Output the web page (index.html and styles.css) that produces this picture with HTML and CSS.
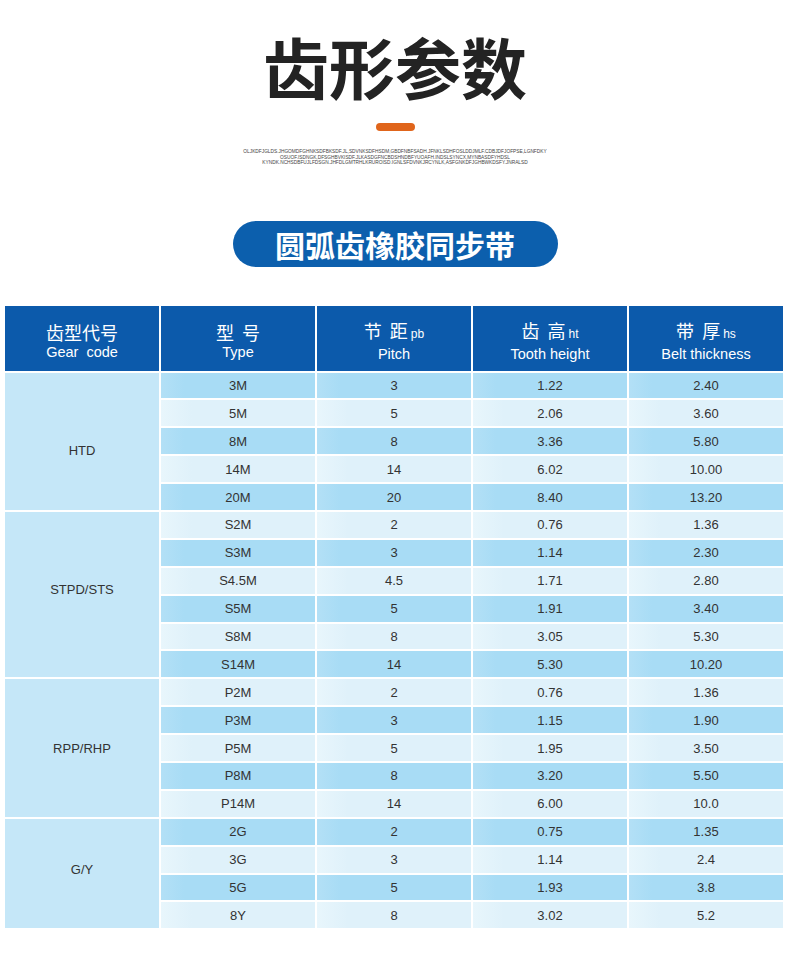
FILE: index.html
```html
<!DOCTYPE html>
<html lang="zh-CN">
<head>
<meta charset="utf-8">
<title>齿形参数</title>
<link rel="stylesheet" href="styles.css">
</head>
<body>
<div class="page">
  <h1 class="title">齿形参数</h1>
  <div class="accent"></div>
  <div class="fine">
    <p>OLJKDFJGLDS.JHGOMDFGHNKSDFBKSDF.JL,SDVNKSDFHSDM,GBDFNBFSADH.JFNKLSDHFOSLDDJMLF.CDBJDFJOFPSE,LGNFDKY</p>
    <p>OSUOF.ISDNGK,DFSGHBVKISDF.JLKASDGFNCBDSHNDBFYUOAFH.INDSLSYNCX,MYNBASDFYHDSL</p>
    <p>KYNDK.NCHSDBFUJLFDSGN.JHFDLGMTRHLKRUROISD.IGNLSFDVNKJRCYNLK,ASFGNKDFJGHBWKDSFY.JNRALSD</p>
  </div>
  <div class="pill">圆弧齿橡胶同步带</div>

  <div class="grid">
    <div class="hd"><span class="zh">齿型代号</span><span class="en">Gear&nbsp; code</span></div>
    <div class="hd"><span class="zh">型&nbsp;&nbsp;号</span><span class="en">Type</span></div>
    <div class="hd"><span class="zh">节&nbsp;&nbsp;距<small>pb</small></span><span class="en">Pitch</span></div>
    <div class="hd"><span class="zh">齿&nbsp;&nbsp;高<small>ht</small></span><span class="en">Tooth height</span></div>
    <div class="hd"><span class="zh">带&nbsp;&nbsp;厚<small>hs</small></span><span class="en">Belt thickness</span></div>

    <div class="grp span5 lower">HTD</div>
    <div class="c d">3M</div><div class="c d">3</div><div class="c d">1.22</div><div class="c d">2.40</div>
    <div class="c l">5M</div><div class="c l">5</div><div class="c l">2.06</div><div class="c l">3.60</div>
    <div class="c d">8M</div><div class="c d">8</div><div class="c d">3.36</div><div class="c d">5.80</div>
    <div class="c l">14M</div><div class="c l">14</div><div class="c l">6.02</div><div class="c l">10.00</div>
    <div class="c d">20M</div><div class="c d">20</div><div class="c d">8.40</div><div class="c d">13.20</div>

    <div class="grp span6 higher">STPD/STS</div>
    <div class="c l">S2M</div><div class="c l">2</div><div class="c l">0.76</div><div class="c l">1.36</div>
    <div class="c d">S3M</div><div class="c d">3</div><div class="c d">1.14</div><div class="c d">2.30</div>
    <div class="c l">S4.5M</div><div class="c l">4.5</div><div class="c l">1.71</div><div class="c l">2.80</div>
    <div class="c d">S5M</div><div class="c d">5</div><div class="c d">1.91</div><div class="c d">3.40</div>
    <div class="c l">S8M</div><div class="c l">8</div><div class="c l">3.05</div><div class="c l">5.30</div>
    <div class="c d">S14M</div><div class="c d">14</div><div class="c d">5.30</div><div class="c d">10.20</div>

    <div class="grp span5">RPP/RHP</div>
    <div class="c l">P2M</div><div class="c l">2</div><div class="c l">0.76</div><div class="c l">1.36</div>
    <div class="c d">P3M</div><div class="c d">3</div><div class="c d">1.15</div><div class="c d">1.90</div>
    <div class="c l">P5M</div><div class="c l">5</div><div class="c l">1.95</div><div class="c l">3.50</div>
    <div class="c d">P8M</div><div class="c d">8</div><div class="c d">3.20</div><div class="c d">5.50</div>
    <div class="c l">P14M</div><div class="c l">14</div><div class="c l">6.00</div><div class="c l">10.0</div>

    <div class="grp span4 higher-sm">G/Y</div>
    <div class="c d">2G</div><div class="c d">2</div><div class="c d">0.75</div><div class="c d">1.35</div>
    <div class="c l">3G</div><div class="c l">3</div><div class="c l">1.14</div><div class="c l">2.4</div>
    <div class="c d">5G</div><div class="c d">5</div><div class="c d">1.93</div><div class="c d">3.8</div>
    <div class="c l">8Y</div><div class="c l">8</div><div class="c l">3.02</div><div class="c l">5.2</div>
  </div>
</div>
</body>
</html>
```
FILE: styles.css
```css
html, body {
  margin: 0;
  padding: 0;
  background: #ffffff;
}
body {
  font-family: "Liberation Sans", "Noto Sans CJK SC", sans-serif;
  color: #333333;
}
.page {
  width: 790px;
  display: flex;
  flex-direction: column;
  align-items: center;
}
.title {
  margin: 32px 0 0 0;
  font-family: "Noto Sans CJK SC", sans-serif;
  font-weight: 700;
  font-size: 66px;
  line-height: 66px;
  color: #232323;
  letter-spacing: 0;
}
.accent {
  margin-top: 25px;
  width: 39px;
  height: 8px;
  border-radius: 4px;
  background: #e0651b;
}
.fine {
  margin-top: 18px;
  text-align: center;
  font-family: "Liberation Sans", sans-serif;
  font-size: 4.8px;
  line-height: 5.5px;
  color: #444444;
}
.fine p {
  margin: 0;
}
.pill {
  margin-top: 55px;
  width: 325px;
  height: 46px;
  border-radius: 23px;
  background: #0c5fad;
  color: #ffffff;
  font-family: "Noto Sans CJK SC", sans-serif;
  font-weight: 700;
  font-size: 30px;
  line-height: 46px;
  text-align: center;
}
.grid {
  align-self: flex-start;
  margin: 39px 0 0 5px;
  width: 778px;
  display: grid;
  grid-template-columns: repeat(5, 1fr);
  grid-template-rows: 65px repeat(20, 25.9px);
  gap: 2px;
}
.hd {
  background: #0c5aab;
  color: #ffffff;
  display: flex;
  flex-direction: column;
  align-items: center;
  justify-content: center;
  padding-top: 6px;
}
.hd .zh {
  font-family: "Noto Sans CJK SC", sans-serif;
  font-size: 18px;
  line-height: 22px;
  font-weight: 400;
}
.hd .zh small {
  font-family: "Liberation Sans", sans-serif;
  font-size: 12px;
  margin-left: 3px;
  font-weight: 400;
}
.hd .en {
  font-size: 14.5px;
  line-height: 19px;
}
.grp {
  grid-column: 1;
  background: #c5e7f8;
  display: flex;
  align-items: center;
  justify-content: center;
  font-size: 13px;
}
.span5 { grid-row: span 5; }
.span6 { grid-row: span 6; }
.span4 { grid-row: span 4; }
.lower { padding-top: 18px; }
.higher { padding-bottom: 10px; }
.higher-sm { padding-bottom: 8px; }
.c {
  display: flex;
  align-items: center;
  justify-content: center;
  font-size: 13px;
}
.d {
  background: linear-gradient(90deg, #b3e0f6 0%, #a8dcf5 15%, #a8dcf5 100%);
}
.l {
  background: linear-gradient(90deg, #e8f6fc 0%, #dff1fa 20%, #dff1fa 100%);
}
```
